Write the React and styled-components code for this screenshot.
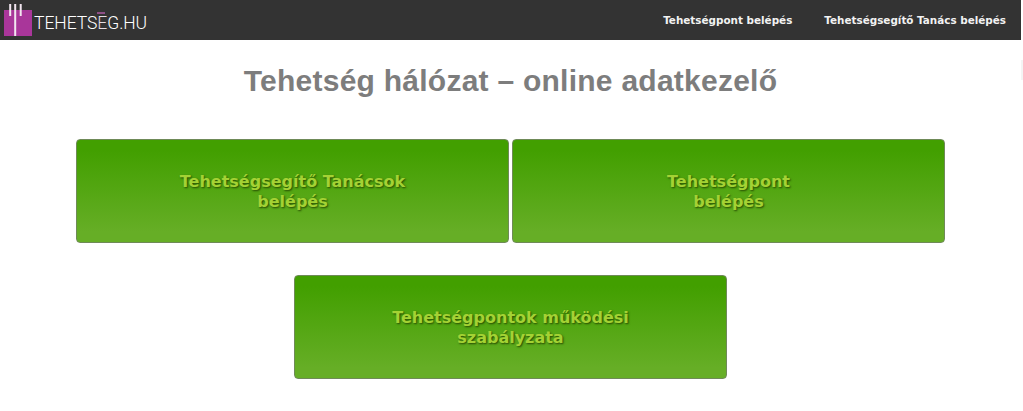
import styled, { createGlobalStyle } from "styled-components";

const GlobalStyle = createGlobalStyle`
	html, body {
		margin: 0;
		padding: 0;
		background: #fff;
		font-family: "DejaVu Sans", Verdana, sans-serif;
	}
`;

const tiles = [
	[
		{ id: 1, first: "Tehetségsegítő Tanácsok", second: "belépés" },
		{ id: 2, first: "Tehetségpont", second: "belépés" },
	],
	[{ id: 3, first: "Tehetségpontok működési", second: "szabályzata" }],
];

export default function App() {
	return (
		<>
			<GlobalStyle />
			<Page>
				<Header>
					<Logo>
						<LogoMark viewBox="0 0 29 37" aria-hidden="true">
							<rect x="0" y="10" width="28" height="26" fill="#a9369a" />
							<rect x="5.2" y="4" width="2" height="12" fill="#f2e6f0" />
							<rect x="10.2" y="4" width="2" height="32" fill="#f2e6f0" />
							<rect x="15.7" y="4" width="2" height="12" fill="#f2e6f0" />
						</LogoMark>
						<LogoText>
							TEHETS<LogoLetter>E</LogoLetter>G.HU
						</LogoText>
					</Logo>
					<Nav>
						<NavLink>Tehetségpont belépés</NavLink>
						<NavLink>Tehetségsegítő Tanács belépés</NavLink>
					</Nav>
				</Header>
				<Title>Tehetség hálózat – online adatkezelő</Title>
				<Tiles>
					{tiles.map((row) => (
						<TileRow key={row[0].id}>
							{row.map((tile) => (
								<Tile key={tile.id}>
									{tile.first}
									<br />
									{tile.second}
								</Tile>
							))}
						</TileRow>
					))}
				</Tiles>
			</Page>
			<ScrollThumb />
		</>
	);
}

const Page = styled.div`
	width: 1021px;
	height: 411px;
	overflow: hidden;
`;

const ScrollThumb = styled.div`
	position: absolute;
	top: 60px;
	left: 1021px;
	width: 2px;
	height: 20px;
	background: #f4f4f4;
`;

const Header = styled.header`
	height: 40px;
	background: #333333;
	display: flex;
	align-items: center;
	justify-content: space-between;
`;

const Logo = styled.div`
	display: flex;
	align-items: flex-end;
	height: 37px;
	padding-left: 4px;
	align-self: flex-start;
`;

const LogoMark = styled.svg`
	width: 29px;
	height: 37px;
	display: block;
`;

const LogoText = styled.span`
	font-family: "Roboto", sans-serif;
	font-weight: 300;
	font-size: 17.5px;
	line-height: 18px;
	color: #ffffff;
	margin-left: 1px;
	padding-bottom: 5px;
	letter-spacing: -0.05px;
`;

const LogoLetter = styled.span`
	position: relative;
	color: #e4dce2;

	&::before {
		content: "";
		position: absolute;
		left: 0;
		right: 2px;
		top: -1px;
		height: 2px;
		background: #8e4f86;
	}
`;

const Nav = styled.nav`
	display: flex;
	gap: 32px;
	padding-right: 15px;
`;

const NavLink = styled.a`
	font-size: 10.4px;
	font-weight: 700;
	color: #f2f2f2;
`;

const Title = styled.h1`
	margin: 0;
	padding-top: 23px;
	height: 75px;
	box-sizing: border-box;
	text-align: center;
	font-family: "Liberation Sans", Arial, sans-serif;
	font-size: 30px;
	letter-spacing: 0.25px;
	line-height: 35px;
	font-weight: 700;
	color: #7d7d7d;
`;

const Tiles = styled.div`
	display: flex;
	flex-direction: column;
	gap: 32px;
	padding-top: 24px;
`;

const TileRow = styled.div`
	display: flex;
	justify-content: center;
	gap: 3px;
`;

const Tile = styled.a`
	width: 433px;
	height: 104px;
	box-sizing: border-box;
	display: block;
	padding-top: 32px;
	text-align: center;
	border: 1px solid #6f8a58;
	border-radius: 4px;
	background: linear-gradient(to bottom, #429f00 10%, #66ae26 90%);
	font-size: 16px;
	line-height: 20px;
	font-weight: 700;
	color: #a4d234;
	text-shadow: 1px 1px 2px #264a00;
`;
